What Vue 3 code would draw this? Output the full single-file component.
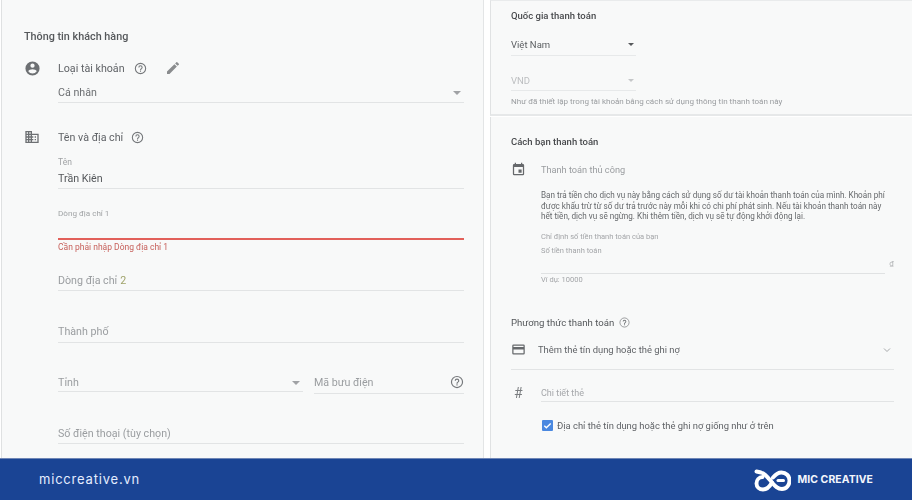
<script setup>
const body = 'Bạn trả tiền cho dịch vụ này bằng cách sử dụng số dư tài khoản thanh toán của mình. Khoản phí được khấu trừ từ số dư trả trước này mỗi khi có chi phí phát sinh. Nếu tài khoản thanh toán này hết tiền, dịch vụ sẽ ngừng. Khi thêm tiền, dịch vụ sẽ tự động khởi động lại.'
</script>

<template>
  <div class="page">
    <main class="main">
      <section class="left">
        <h2 class="title">Thông tin khách hàng</h2>
        <div class="row account">
          <svg class="ico" viewBox="0 0 24 24"><path d="M12 2a10 10 0 1 0 0 20 10 10 0 0 0 0-20zm0 3a3 3 0 1 1 0 6 3 3 0 0 1 0-6zm0 14.2a7.2 7.2 0 0 1-6-3.2c0-2 4-3.1 6-3.1s6 1.1 6 3.1a7.2 7.2 0 0 1-6 3.2z"/></svg>
          <span class="label">Loại tài khoản</span>
          <svg class="help" viewBox="0 0 24 24"><circle cx="12" cy="12" r="9.5" fill="none" stroke="currentColor" stroke-width="2"/><path d="M11 16h2v2h-2zM12 6a4 4 0 0 0-4 4h2a2 2 0 1 1 4 0c0 2-3 1.800-3 5h2c0-2.300 3-2.500 3-5a4 4 0 0 0-4-4z" fill="currentColor"/></svg>
          <svg class="pen" viewBox="0 0 24 24"><path d="M3 17.200V21h3.800L17.800 9.900l-3.700-3.700zM20.700 7a1 1 0 0 0 0-1.400l-2.300-2.300a1 1 0 0 0-1.400 0l-1.800 1.800 3.700 3.700z"/></svg>
        </div>
        <div class="field select type"><span>Cá nhân</span><i class="caret"></i></div>
        <div class="row address">
          <svg class="ico building" viewBox="0 0 24 24"><path d="M12 7V3H2v18h20V7zM6 19H4v-2h2zm0-4H4v-2h2zm0-4H4V9h2zm0-4H4V5h2zm4 12H8v-2h2zm0-4H8v-2h2zm0-4H8V9h2zm0-4H8V5h2zm10 12h-8v-2h2v-2h-2v-2h2v-2h-2V9h8zm-2-8h-2v2h2zm0 4h-2v2h2z"/></svg>
          <span class="label">Tên và địa chỉ</span>
          <svg class="help" viewBox="0 0 24 24"><circle cx="12" cy="12" r="9.500" fill="none" stroke="currentColor" stroke-width="2"/><path d="M11 16h2v2h-2zM12 6a4 4 0 0 0-4 4h2a2 2 0 1 1 4 0c0 2-3 1.800-3 5h2c0-2.300 3-2.500 3-5a4 4 0 0 0-4-4z" fill="currentColor"/></svg>
        </div>
        <div class="small name-cap">Tên</div>
        <div class="field value name">Trần Kiên</div>
        <div class="small line-cap">Dòng địa chỉ 1</div>
        <div class="error-line"></div>
        <div class="error">Cần phải nhập Dòng địa chỉ 1</div>
        <div class="field ph l2">Dòng địa chỉ<b>2</b></div>
        <div class="field ph city">Thành phố</div>
        <div class="split">
          <div class="field ph state"><span>Tỉnh</span><i class="caret"></i></div>
          <div class="field ph zip"><span>Mã bưu điện</span>
            <svg class="help" viewBox="0 0 24 24"><circle cx="12" cy="12" r="9.500" fill="none" stroke="currentColor" stroke-width="2"/><path d="M11 16h2v2h-2zM12 6a4 4 0 0 0-4 4h2a2 2 0 1 1 4 0c0 2-3 1.800-3 5h2c0-2.300 3-2.500 3-5a4 4 0 0 0-4-4z" fill="currentColor"/></svg>
          </div>
        </div>
        <div class="field ph phone">Số điện thoại (tùy chọn)</div>
      </section>

      <div class="right">
        <section class="card top">
          <h3 class="h3">Quốc gia thanh toán</h3>
          <div class="mini vn"><span>Việt Nam</span><i class="caret dark"></i></div>
          <div class="mini vnd"><span>VND</span><i class="caret light"></i></div>
          <p class="note">Như đã thiết lập trong tài khoản bằng cách sử dụng thông tin thanh toán này</p>
        </section>
        <section class="card pay">
          <h3 class="h3">Cách bạn thanh toán</h3>
          <div class="manual">
            <svg class="cal" viewBox="0 0 24 24"><path d="M17 12h-5v5h5zM16 1v2H8V1H6v2H5a2 2 0 0 0-2 2v14a2 2 0 0 0 2 2h14a2 2 0 0 0 2-2V5a2 2 0 0 0-2-2h-1V1zm3 18H5V8h14z"/></svg>
            <span>Thanh toán thủ công</span>
          </div>
          <p class="body">{{ body }}</p>
          <div class="tiny c1">Chỉ định số tiền thanh toán của bạn</div>
          <div class="tiny c2">Số tiền thanh toán</div>
          <div class="amount"><span>₫</span></div>
          <div class="tiny c3">Ví dụ: 10000</div>
          <div class="method"><span>Phương thức thanh toán</span>
            <svg class="help sm" viewBox="0 0 24 24"><circle cx="12" cy="12" r="10" fill="none" stroke="currentColor" stroke-width="1.500"/><path d="M11 16h2v2h-2zM12 6a4 4 0 0 0-4 4h2a2 2 0 1 1 4 0c0 2-3 1.800-3 5h2c0-2.300 3-2.500 3-5a4 4 0 0 0-4-4z" fill="currentColor"/></svg>
          </div>
          <div class="add">
            <svg class="cardico" viewBox="0 0 24 24"><path d="M20 4H4a2 2 0 0 0-2 2v12a2 2 0 0 0 2 2h16a2 2 0 0 0 2-2V6a2 2 0 0 0-2-2zm0 14H4v-6h16zm0-10H4V6h16z"/></svg>
            <span>Thêm thẻ tín dụng hoặc thẻ ghi nợ</span>
            <svg class="chev" viewBox="0 0 24 24"><path d="M6 9l6 6 6-6" fill="none" stroke="currentColor" stroke-width="2"/></svg>
          </div>
          <div class="detail"><span class="hash">#</span><span class="detail-text">Chi tiết thẻ</span></div>
          <div class="check">
            <span class="box"><svg viewBox="0 0 24 24"><path d="M5 12.500l4.500 4.500L19 7.500" fill="none" stroke="#fff" stroke-width="3"/></svg></span>
            <span>Địa chỉ thẻ tín dụng hoặc thẻ ghi nợ giống như ở trên</span>
          </div>
        </section>
      </div>
    </main>
    <footer class="footer">
      <span class="site">miccreative.vn</span>
      <div class="brand">
        <svg class="logo" viewBox="0 0 37 24" fill="none" stroke="#fff" stroke-width="3.900" stroke-linecap="round"><path d="M2.500 3.500L7 4.500C12 6 15 11 18 14.500s5.500 6.500 10 6.500c4.500 0 7.500-3.800 7.500-8.500S32 4.500 27.500 4.500c-3.500 0-6 2-8.500 5"/><path d="M18 14.500C15.500 19 13 21.500 9 21.500c-3.700 0-6.500-2.500-6.500-6S5 9 8.500 9"/><path d="M24 12.500h5.500" stroke-width="3"/></svg>
        <span>MIC CREATIVE</span>
      </div>
    </footer>
  </div>
</template>

<style scoped>
.page { width: 912px; height: 500px; display: flex; flex-direction: column; overflow: hidden; font-family: Roboto, "Noto Sans", sans-serif; background: #fff; color: #5f6368; }
.main { height: 458px; display: flex; background: #fff; filter: blur(.3px); }
.left { width: 483px; margin-left: 1px; background: #f8f9f9; border-left: 1px solid #dfe1e2; border-right: 1px solid #e3e5e6; padding: 30px 19px 0 22px; box-sizing: border-box; }
.title { margin: 0; font-size: 10.800px; line-height: 14px; font-weight: 500; color: #55585b; }
.row { display: flex; align-items: center; height: 20px; }
.account { margin-top: 14px; }
.ico { width: 17px; height: 17px; fill: #6d7073; flex: none; margin-right: 17px; }
.label { font-size: 10.700px; color: #606367; }
.help { width: 13px; height: 13px; color: #75787b; flex: none; margin-left: 9px; }
.address .help { margin-left: 8px; }
.pen { width: 16px; height: 16px; fill: #8a8c8e; margin-left: 18px; }
.field { margin-left: 34px; box-sizing: border-box; border-bottom: 1px solid #e2e4e5; font-size: 10.700px; display: flex; align-items: center; justify-content: space-between; }
.select { color: #6c6f72; }
.type { margin-top: 8px; height: 17px; padding-bottom: 3px; }
.caret { width: 0; height: 0; border-left: 4px solid transparent; border-right: 4px solid transparent; border-top: 4px solid #a0a2a5; margin-right: 3px; }
.address { margin-top: 24px; }
.building { width: 16px; height: 16px; margin-right: 18px; }
.small { margin-left: 34px; font-size: 8.500px; line-height: 10px; color: #a0a3a5; }
.name-cap { margin-top: 10px; }
.value { color: #54575a; }
.name { margin-top: 2px; height: 20px; }
.line-cap { margin-top: 19px; font-size: 8.100px; }
.error-line { margin: 20px 0 0 34px; height: 2px; background: #e2605a; }
.error { margin: 2px 0 0 34px; font-size: 8.500px; line-height: 11px; color: #c7615c; }
.ph { color: #9a9da0; }
.l2 { margin-top: 18px; height: 20px; justify-content: flex-start; }
.l2 b { font-weight: 400; color: #9fa36a; margin-left: 3px; }
.city { margin-top: 31px; height: 21px; padding-bottom: 1px; }
.split { display: flex; margin-left: 34px; margin-top: 29px; gap: 11px; align-items: flex-start; }
.split .field { margin-left: 0; }
.state { width: 245px; height: 20px; padding-top: 2px; }
.zip { flex: 1; height: 22px; }
.zip .help { margin-bottom: 2px; width: 14px; height: 14px; }
.phone { margin-top: 29px; height: 21px; padding-top: 1px; }

.right { flex: 1; display: flex; flex-direction: column; padding-left: 6px; }
.card { background: #f8f9f9; border-left: 1px solid #e0e2e3; }
.top { height: 116px; padding: 9px 0 0 20px; box-sizing: border-box; border-bottom: 2px solid #e6e8e9; border-top: 1px solid #e9ebec; }
.h3 { margin: 0; font-size: 9.500px; line-height: 12px; font-weight: 500; color: #47494c; }
.mini { width: 125px; display: flex; justify-content: space-between; align-items: center; font-size: 9.500px; border-bottom: 1px solid #e7e9ea; box-sizing: border-box; }
.vn { margin-top: 17px; height: 17px; padding-bottom: 5px; color: #5a5d60; }
.vnd { margin-top: 18px; height: 17px; padding-bottom: 3px; color: #bcbec0; }
.caret.dark { border-left-width: 3.500px; border-right-width: 3.500px; border-top: 3.500px solid #56595c; margin-right: 2px; }
.caret.light { border-left-width: 3.500px; border-right-width: 3.500px; border-top: 3.500px solid #c5c7c9; margin-right: 2px; }
.note { margin: 5px 0 0; font-size: 8.050px; line-height: 11px; color: #9a9da0; white-space: nowrap; }
.pay { flex: 1; padding: 19px 0 0 20px; margin-top: 1px; box-sizing: border-box; }
.manual { display: flex; align-items: center; margin-top: 13px; height: 16px; font-size: 9.200px; color: #9a9da0; }
.cal { width: 15px; height: 15px; fill: #66696c; margin-right: 15px; }
.body { margin: 13px 18px 0 30px; font-size: 8.150px; line-height: 10.500px; color: #65686b; }
.tiny { margin-left: 30px; font-size: 7.500px; line-height: 10px; color: #a3a5a8; }
.c1 { margin-top: 10px; }
.c2 { margin-top: 4px; }
.amount { margin: 2px 27px 0 30px; height: 15px; border-bottom: 1px solid #e0e2e3; position: relative; font-size: 8px; color: #b0b2b4; }
.amount span { position: absolute; right: -9px; top: 1px; }
.c3 { margin-top: 1px; }
.method { display: flex; align-items: center; margin-top: 31px; font-size: 9.600px; color: #54575a; height: 14px; }
.help.sm { width: 11px; height: 11px; margin-left: 5px; }
.add { display: flex; align-items: center; margin: 13px 18px 0 0; height: 27px; padding-bottom: 12px; box-sizing: border-box; border-bottom: 1px solid #e2e4e5; font-size: 9.400px; color: #606367; }
.cardico { width: 15px; height: 15px; fill: #66696c; margin-right: 12px; flex: none; }
.chev { width: 12px; height: 12px; color: #a6a8aa; margin-left: auto; margin-right: 1px; }
.detail { display: flex; margin: 10px 18px 0 0; height: 22px; align-items: stretch; }
.hash { width: 30px; padding-left: 3px; box-sizing: border-box; font-size: 14px; color: #7b7e81; line-height: 26px; }
.detail-text { flex: 1; border-bottom: 1px solid #e2e4e5; font-size: 9px; color: #a5a7aa; padding-top: 5px; line-height: 16px; }
.check { display: flex; align-items: center; margin: 18px 0 0 31px; font-size: 9.400px; color: #5f6266; height: 12px; }
.box { width: 11px; height: 11px; background: #4a88e0; border-radius: 1px; margin-right: 4px; display: flex; }
.box svg { width: 11px; height: 11px; }
.footer { height: 42px; background: #1a4494; display: flex; align-items: center; justify-content: space-between; padding: 0 39px 2px; box-sizing: border-box; border-top: 1px solid #6f86b6; }
.site { font-family: Inter, Roboto, sans-serif; font-size: 13px; letter-spacing: .8px; color: #e4edff; }
.brand { display: flex; align-items: center; gap: 6px; font-family: Inter, Roboto, sans-serif; font-weight: 700; font-size: 10.400px; color: #f3f6fc; letter-spacing: .1px; margin-top: 2px; }
.logo { width: 37px; height: 24px; }
</style>
